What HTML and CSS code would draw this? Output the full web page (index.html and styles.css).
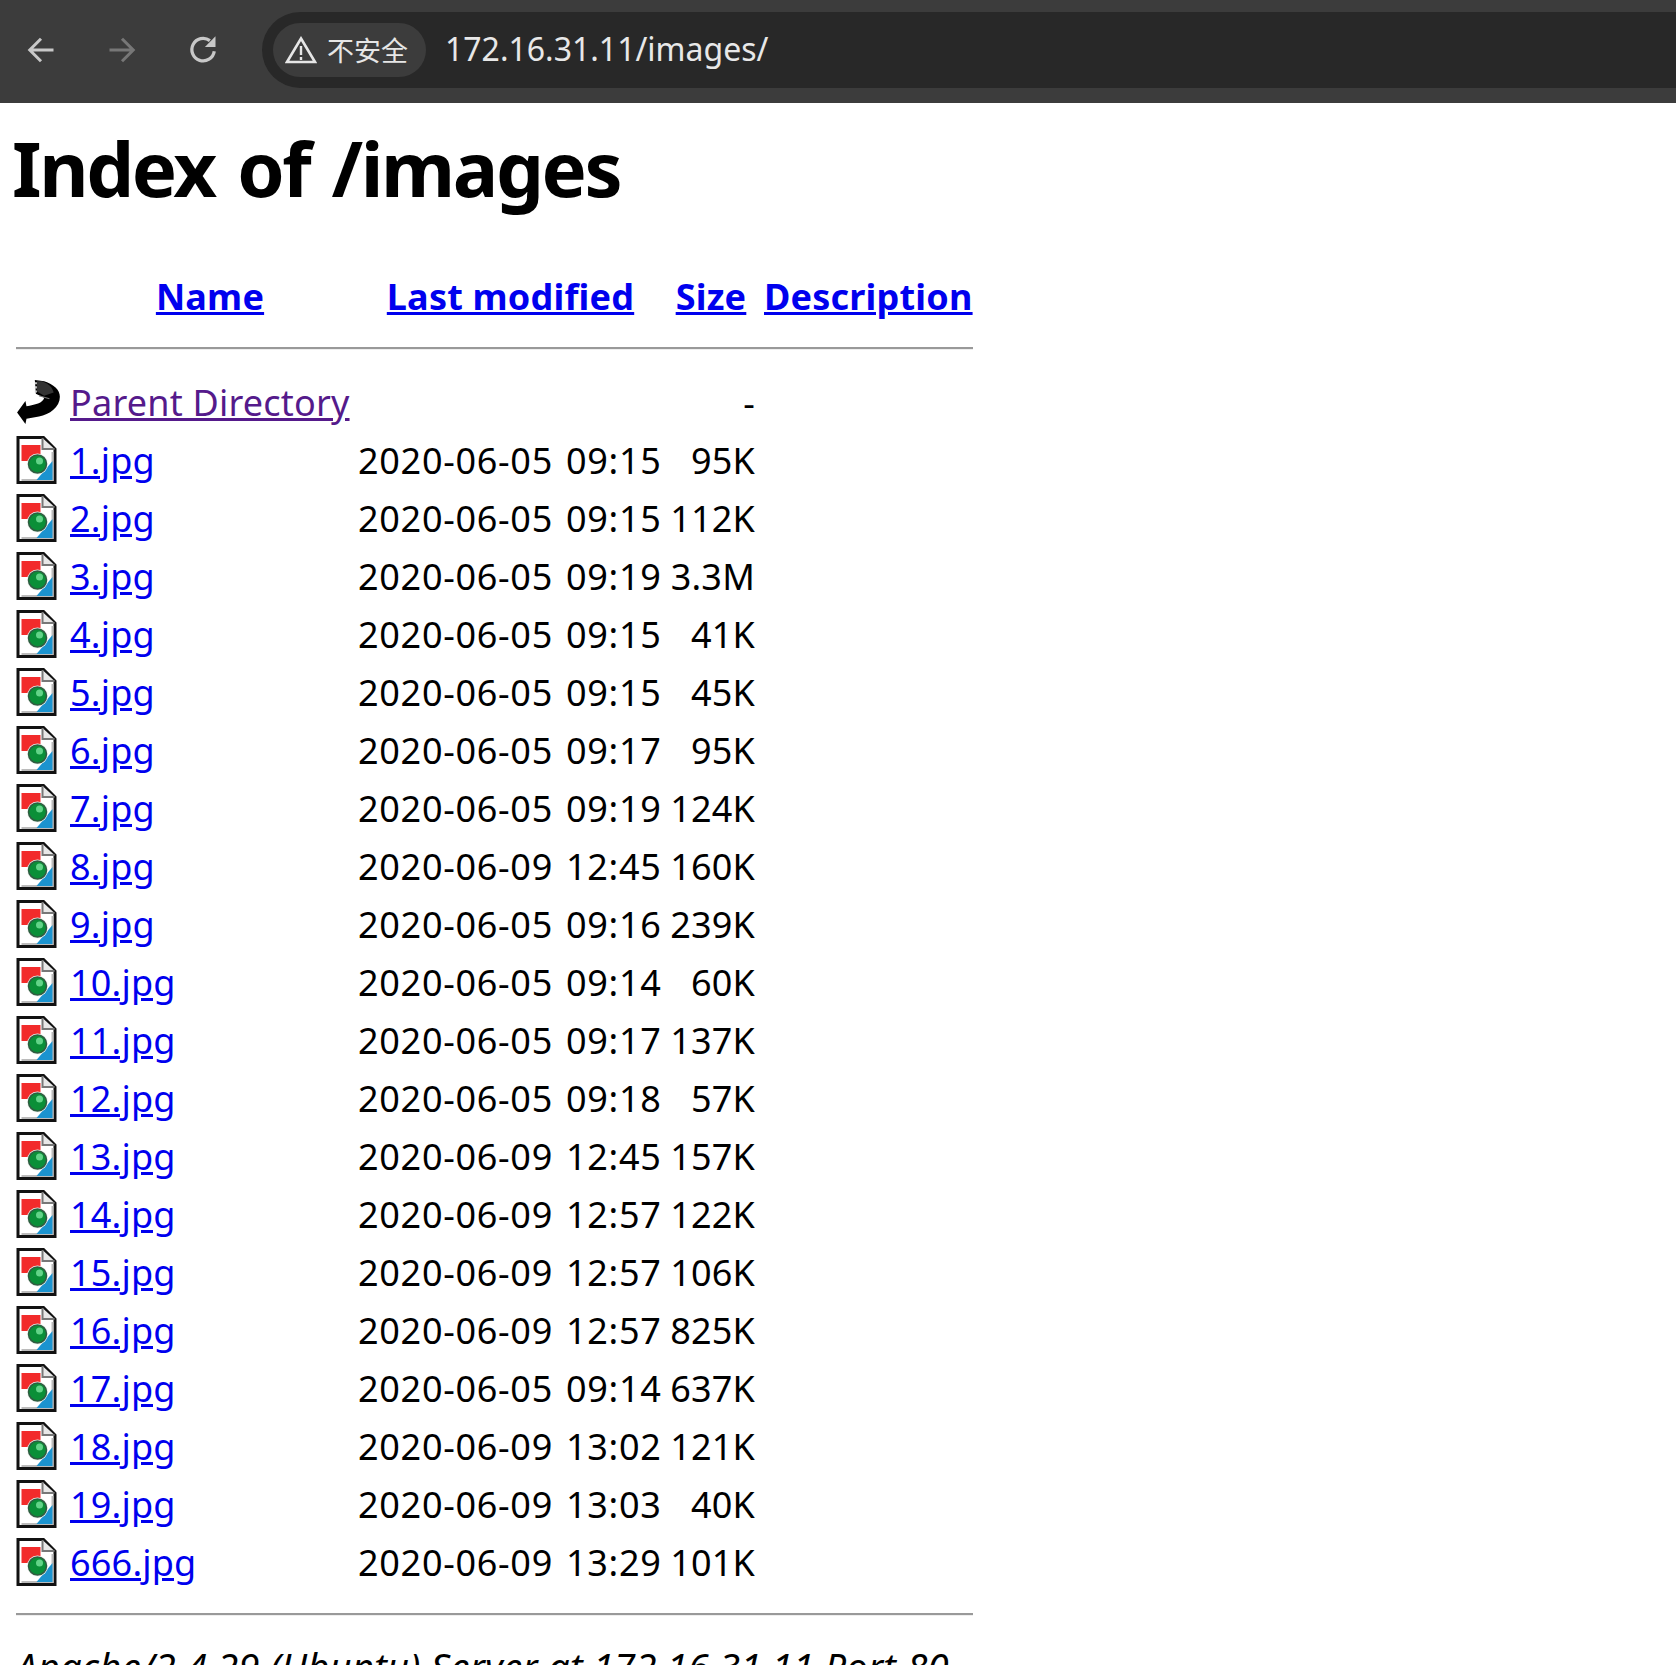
FILE: index.html
```html
<!DOCTYPE html>
<html lang="en">
<head>
    <meta charset="UTF-8">
    <title>Index of /images</title>
    <link rel="stylesheet" href="styles.css">
</head>
<body>
    <svg class="sprites" width="0" height="0">
        <symbol id="icon-image" viewBox="0 0 40 48">
            <path d="M1.500 1.500H27L38.500 13V46.500H1.500Z" fill="#fff" stroke="#111" stroke-width="3"/>
            <path d="M26 2V13H38" fill="#e8e8e8" stroke="#777" stroke-width="2"/>
            <path d="M36 16V44H5" fill="none" stroke="#bbb" stroke-width="2"/>
            <rect x="5" y="9" width="19" height="16" fill="#f22b2b"/>
            <path d="M36 25V44H20Z" fill="#1b93cf"/>
            <circle cx="21" cy="28" r="10.500" fill="#eef2ee"/>
            <circle cx="21" cy="28" r="9" fill="#0a8f38" stroke="#2f5c40" stroke-width="1.500"/>
            <circle cx="23" cy="25" r="3.500" fill="#62d488"/>
        </symbol>
        <symbol id="icon-back" viewBox="6 2 44 46">
            <path d="M7 35L15 24L16 29C24 28 32 26 33 21L25 17L24 4L33 5C42 8 48 13 48 20C48 30 38 37 28 39L16 41L15 46Z" fill="#000"/>
            <path d="M26 5H31C37 7 41 11 42 16L33 19L26 15Z" fill="#333"/>
            <path d="M25 6V8M25 10V12M25 14V16" stroke="#ccc" stroke-width="2"/>
            <path d="M28 19L38 22" stroke="#777" stroke-width="1"/>
        </symbol>
    </svg>

    <div class="toolbar">
        <div class="nav-buttons">
            <svg class="nav-icon" viewBox="0 0 24 24"><path d="M22 12H3M12 3L3 12L12 21" fill="none" stroke="#c8c8c8" stroke-width="2.400"/></svg>
            <svg class="nav-icon" viewBox="0 0 24 24"><path d="M2 12H21M12 3L21 12L12 21" fill="none" stroke="#777" stroke-width="2.400"/></svg>
            <svg class="nav-icon" viewBox="0 0 24 24"><path d="M21 13A9 9 0 1 1 17.500 4.500" fill="none" stroke="#c8c8c8" stroke-width="2.600"/><path d="M22 1V9.500H13.500Z" fill="#c8c8c8"/></svg>
        </div>
        <div class="omnibox">
            <div class="security-chip">
                <svg class="warn-icon" viewBox="0 0 32 28"><path d="M16 2.500L30 26H2Z" fill="none" stroke="#e6e6e6" stroke-width="2.600"/><path d="M16 10V19M16 21V24" stroke="#e6e6e6" stroke-width="2.400"/></svg>
                <span>不安全</span>
            </div>
            <div class="url">172.16.31.11/images/</div>
        </div>
    </div>

    <div class="page">
        <h1>Index of /images</h1>
        <table>
            <tr>
                <th class="col-icon"></th>
                <th class="col-name"><a href="#">Name</a></th>
                <th class="col-date"><a href="#">Last modified</a></th>
                <th class="col-size"><a href="#">Size</a></th>
                <th class="col-desc"><a href="#">Description</a></th>
            </tr>
            <tr><th class="rule" colspan="5"><hr></th></tr>
            <tr>
                <td class="col-icon"><svg class="back-icon"><use href="#icon-back"/></svg></td>
                <td><a class="visited" href="#">Parent Directory</a></td>
                <td class="col-date"></td>
                <td class="col-size">-</td>
                <td></td>
            </tr>
            <tr><td class="col-icon"><svg class="file-icon"><use href="#icon-image"/></svg></td><td><a href="#">1.jpg</a></td><td class="col-date date">2020-06-05 09:15</td><td class="col-size">95K</td><td></td></tr>
            <tr><td class="col-icon"><svg class="file-icon"><use href="#icon-image"/></svg></td><td><a href="#">2.jpg</a></td><td class="col-date date">2020-06-05 09:15</td><td class="col-size">112K</td><td></td></tr>
            <tr><td class="col-icon"><svg class="file-icon"><use href="#icon-image"/></svg></td><td><a href="#">3.jpg</a></td><td class="col-date date">2020-06-05 09:19</td><td class="col-size">3.3M</td><td></td></tr>
            <tr><td class="col-icon"><svg class="file-icon"><use href="#icon-image"/></svg></td><td><a href="#">4.jpg</a></td><td class="col-date date">2020-06-05 09:15</td><td class="col-size">41K</td><td></td></tr>
            <tr><td class="col-icon"><svg class="file-icon"><use href="#icon-image"/></svg></td><td><a href="#">5.jpg</a></td><td class="col-date date">2020-06-05 09:15</td><td class="col-size">45K</td><td></td></tr>
            <tr><td class="col-icon"><svg class="file-icon"><use href="#icon-image"/></svg></td><td><a href="#">6.jpg</a></td><td class="col-date date">2020-06-05 09:17</td><td class="col-size">95K</td><td></td></tr>
            <tr><td class="col-icon"><svg class="file-icon"><use href="#icon-image"/></svg></td><td><a href="#">7.jpg</a></td><td class="col-date date">2020-06-05 09:19</td><td class="col-size">124K</td><td></td></tr>
            <tr><td class="col-icon"><svg class="file-icon"><use href="#icon-image"/></svg></td><td><a href="#">8.jpg</a></td><td class="col-date date">2020-06-09 12:45</td><td class="col-size">160K</td><td></td></tr>
            <tr><td class="col-icon"><svg class="file-icon"><use href="#icon-image"/></svg></td><td><a href="#">9.jpg</a></td><td class="col-date date">2020-06-05 09:16</td><td class="col-size">239K</td><td></td></tr>
            <tr><td class="col-icon"><svg class="file-icon"><use href="#icon-image"/></svg></td><td><a href="#">10.jpg</a></td><td class="col-date date">2020-06-05 09:14</td><td class="col-size">60K</td><td></td></tr>
            <tr><td class="col-icon"><svg class="file-icon"><use href="#icon-image"/></svg></td><td><a href="#">11.jpg</a></td><td class="col-date date">2020-06-05 09:17</td><td class="col-size">137K</td><td></td></tr>
            <tr><td class="col-icon"><svg class="file-icon"><use href="#icon-image"/></svg></td><td><a href="#">12.jpg</a></td><td class="col-date date">2020-06-05 09:18</td><td class="col-size">57K</td><td></td></tr>
            <tr><td class="col-icon"><svg class="file-icon"><use href="#icon-image"/></svg></td><td><a href="#">13.jpg</a></td><td class="col-date date">2020-06-09 12:45</td><td class="col-size">157K</td><td></td></tr>
            <tr><td class="col-icon"><svg class="file-icon"><use href="#icon-image"/></svg></td><td><a href="#">14.jpg</a></td><td class="col-date date">2020-06-09 12:57</td><td class="col-size">122K</td><td></td></tr>
            <tr><td class="col-icon"><svg class="file-icon"><use href="#icon-image"/></svg></td><td><a href="#">15.jpg</a></td><td class="col-date date">2020-06-09 12:57</td><td class="col-size">106K</td><td></td></tr>
            <tr><td class="col-icon"><svg class="file-icon"><use href="#icon-image"/></svg></td><td><a href="#">16.jpg</a></td><td class="col-date date">2020-06-09 12:57</td><td class="col-size">825K</td><td></td></tr>
            <tr><td class="col-icon"><svg class="file-icon"><use href="#icon-image"/></svg></td><td><a href="#">17.jpg</a></td><td class="col-date date">2020-06-05 09:14</td><td class="col-size">637K</td><td></td></tr>
            <tr><td class="col-icon"><svg class="file-icon"><use href="#icon-image"/></svg></td><td><a href="#">18.jpg</a></td><td class="col-date date">2020-06-09 13:02</td><td class="col-size">121K</td><td></td></tr>
            <tr><td class="col-icon"><svg class="file-icon"><use href="#icon-image"/></svg></td><td><a href="#">19.jpg</a></td><td class="col-date date">2020-06-09 13:03</td><td class="col-size">40K</td><td></td></tr>
            <tr><td class="col-icon"><svg class="file-icon"><use href="#icon-image"/></svg></td><td><a href="#">666.jpg</a></td><td class="col-date date">2020-06-09 13:29</td><td class="col-size">101K</td><td></td></tr>
            <tr><th class="rule" colspan="5"><hr></th></tr>
        </table>
        <address>Apache/2.4.29 (Ubuntu) Server at 172.16.31.11 Port 80</address>
    </div>
</body>
</html>
```
FILE: styles.css
```css
html, body {
    margin: 0;
    padding: 0;
    height: 1665px;
    overflow: hidden;
}
body {
    font-family: "Noto Sans", "Noto Sans CJK SC", sans-serif;
    background-color: white;
    color: black;
}
.sprites {
    display: block;
    height: 0;
}
.toolbar {
    height: 103px;
    box-sizing: border-box;
    background-color: #3c3c3c;
    display: flex;
    align-items: center;
    padding: 11px 0 15px 0;
}
.nav-buttons {
    display: flex;
    gap: 51px;
    padding-left: 26px;
    width: 236px;
    box-sizing: border-box;
}
.nav-icon {
    width: 30px;
    height: 30px;
}
.omnibox {
    flex: 1;
    height: 76px;
    margin-left: 26px;
    background-color: #282828;
    border-radius: 38px 0 0 38px;
    display: flex;
    align-items: center;
    padding-left: 11px;
}
.security-chip {
    display: flex;
    align-items: center;
    gap: 10px;
    height: 54px;
    width: 153px;
    box-sizing: border-box;
    padding-left: 12px;
    background-color: #3c3c3c;
    border-radius: 27px;
    color: #e6e6e6;
    font-size: 27px;
}
.warn-icon {
    width: 32px;
    height: 28px;
}
.url {
    margin-left: 19px;
    padding-bottom: 2px;
    color: #e8e8e8;
    font-size: 32px;
}
.page {
    padding: 0 12px;
}
h1 {
    margin: 15px 0 0 0;
    font-size: 76px;
    letter-spacing: -2.400px;
    word-spacing: 5px;
    line-height: 100px;
    font-weight: bold;
}
table {
    border-collapse: separate;
    border-spacing: 4px 0;
    margin-top: 50px;
    font-size: 36px;
    letter-spacing: 0.200px;
}
th, td {
    padding: 0;
    height: 58px;
    line-height: 58px;
    white-space: nowrap;
}
th {
    font-weight: bold;
    text-align: center;
}
th.rule {
    height: 27px;
    padding-top: 21px;
    line-height: 0;
    vertical-align: top;
}
.col-icon {
    width: 50px;
    text-align: left;
}
.col-name {
    width: 280px;
}
.col-date {
    width: 305px;
    padding-left: 4px;
}
.date {
    letter-spacing: 0.700px;
    word-spacing: 3px;
}
.col-size {
    width: 88px;
    text-align: right;
}
th.col-size {
    text-align: center;
}
.col-desc {
    width: 208px;
    padding-left: 5px;
}
a {
    color: #0000ee;
}
a.visited {
    color: #551a8b;
}
.file-icon {
    display: block;
    width: 41px;
    height: 48px;
    margin-bottom: 3px;
}
.back-icon {
    display: block;
    width: 46px;
    height: 48px;
    margin-bottom: 3px;
}
hr {
    margin: 0;
    border: none;
    border-top: 2px solid #999;
    border-bottom: 1px solid #eee;
}
address {
    margin-top: 0;
    font-size: 38px;
    letter-spacing: 0.300px;
    font-style: italic;
    padding-left: 4px;
    white-space: nowrap;
}
```
